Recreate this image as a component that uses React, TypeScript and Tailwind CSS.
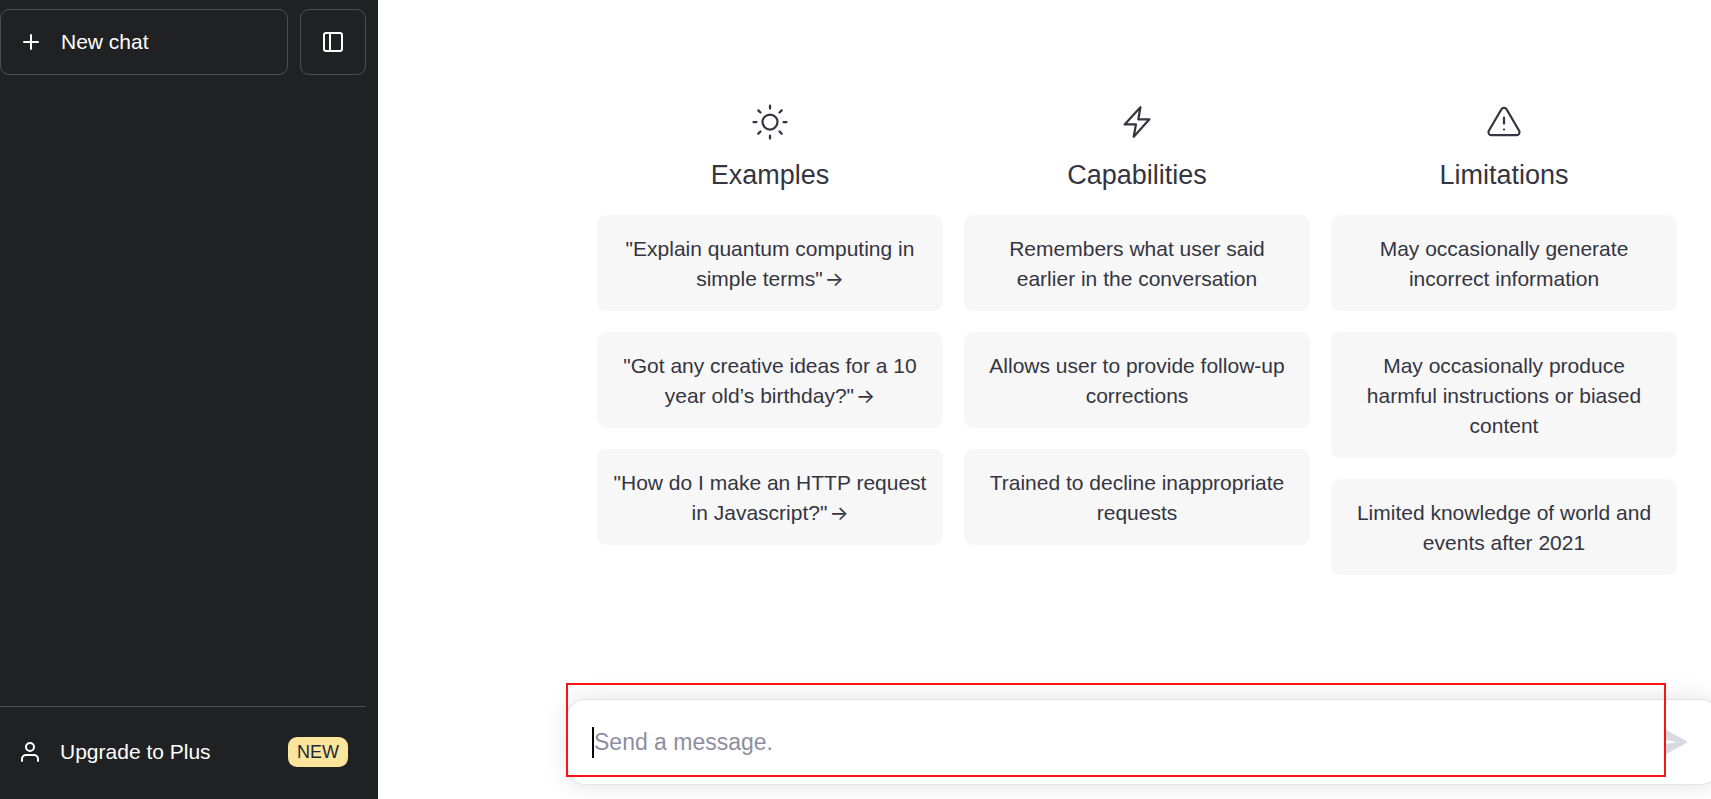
import { useState } from 'react';
import type { ReactNode } from 'react';

const COLUMNS = [
  {
    title: 'Examples',
    icon: <SunIcon />,
    clickable: true,
    items: [
      '"Explain quantum computing in simple terms"',
      '"Got any creative ideas for a 10 year old’s birthday?"',
      '"How do I make an HTTP request in Javascript?"',
    ],
  },
  {
    title: 'Capabilities',
    icon: <BoltIcon />,
    clickable: false,
    items: [
      'Remembers what user said earlier in the conversation',
      'Allows user to provide follow-up corrections',
      'Trained to decline inappropriate requests',
    ],
  },
  {
    title: 'Limitations',
    icon: <WarningIcon />,
    clickable: false,
    items: [
      'May occasionally generate incorrect information',
      'May occasionally produce harmful instructions or biased content',
      'Limited knowledge of world and events after 2021',
    ],
  },
];

function Icon({ className, strokeWidth = 2, children }: { className: string; strokeWidth?: number; children: ReactNode }) {
  return (
    <svg
      viewBox="0 0 24 24"
      fill="none"
      stroke="currentColor"
      strokeWidth={strokeWidth}
      strokeLinecap="round"
      strokeLinejoin="round"
      className={className}
      aria-hidden="true"
    >
      {children}
    </svg>
  );
}

function SunIcon() {
  return (
    <Icon className="size-9" strokeWidth={1.5}>
      <circle cx="12" cy="12" r="5" />
      <path d="M12 1v2M12 21v2M4.22 4.22l1.42 1.42M18.36 18.36l1.42 1.42M1 12h2M21 12h2M4.22 19.78l1.42-1.42M18.36 5.64l1.42-1.42" />
    </Icon>
  );
}

function BoltIcon() {
  return (
    <Icon className="size-9" strokeWidth={1.5}>
      <path d="M3.75 13.6L14.3 2.2l-1.4 8h7.4L9.8 21.8l1.5-8.2H3.75z" />
    </Icon>
  );
}

function WarningIcon() {
  return (
    <Icon className="size-9" strokeWidth={1.5}>
      <path d="M10.29 3.5L1.9 17.8a2 2 0 0 0 1.71 3h16.78a2 2 0 0 0 1.71-3L13.71 3.5a2 2 0 0 0-3.42 0z" />
      <path d="M12 9v4M12 17h.01" />
    </Icon>
  );
}

function Sidebar() {
  return (
    <aside className="flex w-[378px] shrink-0 flex-col bg-[#202123] pr-3 text-white">
      <div className="mt-[9px] flex gap-3">
        <button className="flex h-[66px] flex-1 items-center gap-[18px] rounded-[9px] border border-white/20 pl-[18px] text-[21px]">
          <Icon className="size-6">
            <path d="M12 5v14M5 12h14" />
          </Icon>
          New chat
        </button>
        <button
          aria-label="Hide sidebar"
          className="flex size-[66px] items-center justify-center rounded-[9px] border border-white/20"
        >
          <Icon className="size-6">
            <rect x="3" y="3" width="18" height="18" rx="2" />
            <path d="M9 3v18" />
          </Icon>
        </button>
      </div>

      <div className="mt-auto border-t border-white/20 pb-[13px] pt-[10px]">
        <button className="flex h-[69px] w-full items-center gap-[18px] px-[18px] text-[21px]">
          <Icon className="size-6">
            <path d="M20 21v-2a4 4 0 0 0-4-4H8a4 4 0 0 0-4 4v2" />
            <circle cx="12" cy="7" r="4" />
          </Icon>
          Upgrade to Plus
          <span className="ml-auto rounded-[9px] bg-[#fbe49c] px-[9px] text-[18px] leading-[30px] text-gray-800">NEW</span>
        </button>
      </div>
    </aside>
  );
}

function Composer() {
  const [message, setMessage] = useState('');

  return (
    <form
      onSubmit={(e) => e.preventDefault()}
      className="relative ml-[189px] mr-[-8px] mt-auto mb-[14px] flex h-[86px] items-center rounded-[18px] border border-black/10 bg-white pl-6 pr-[30px] shadow-[0_0_24px_rgba(0,0,0,0.12)]"
    >
      {/* text cursor */}
      <span className="h-[31px] w-[2px] bg-black" />
      <input
        value={message}
        onChange={(e) => setMessage(e.target.value)}
        aria-label="Message"
        placeholder="Send a message."
        className="min-w-0 flex-1 text-[23px] leading-9 text-[#343541] outline-none placeholder:text-[#8e8ea0]"
      />
      <button aria-label="Send message" className="text-[#d9d9e3]">
        <svg viewBox="0 0 16 16" fill="none" className="size-6" aria-hidden="true">
          <path
            d="M.5 1.163A1 1 0 0 1 1.97.28l12.868 6.837a1 1 0 0 1 0 1.766L1.969 15.72A1 1 0 0 1 .5 14.836V10.33a1 1 0 0 1 .816-.983L8.5 8 1.316 6.653A1 1 0 0 1 .5 5.67V1.163Z"
            fill="currentColor"
          />
        </svg>
      </button>
      {/* red marker around the message box */}
      <div className="pointer-events-none absolute -top-[17px] bottom-[7px] -left-[2px] right-[52px] border-2 border-[#f71414]" />
    </form>
  );
}

export default function App() {
  return (
    <div className="flex h-screen overflow-hidden bg-white font-['Liberation_Sans',sans-serif]">
      <Sidebar />
      <main className="flex min-w-0 flex-1 flex-col overflow-hidden text-[#343541]">
        <div className="ml-[219px] mr-[34px] mt-[104px] grid grid-cols-3 gap-[21px]">
          {COLUMNS.map(({ title, icon, clickable, items }) => (
            <section key={title} className="flex flex-col gap-[22px]">
              <h2 className="flex flex-col items-center gap-[17px] text-[27px] leading-9 font-normal">
                {icon}
                {title}
              </h2>
              <ul className="flex flex-col gap-[21px] text-center text-[21px] leading-[30px]">
                {items.map((item) => (
                  <li key={item}>
                    {clickable ? (
                      <button className="block w-full rounded-[9px] bg-[#f7f7f8] px-3 pt-[19px] pb-[17px]">
                        {item}
                        <span className="ml-[2px] inline-block font-['Inter',sans-serif] text-[20px] leading-none">→</span>
                      </button>
                    ) : (
                      <div className="rounded-[9px] bg-[#f7f7f8] px-[18px] pt-[19px] pb-[17px]">{item}</div>
                    )}
                  </li>
                ))}
              </ul>
            </section>
          ))}
        </div>
        <Composer />
      </main>
    </div>
  );
}
